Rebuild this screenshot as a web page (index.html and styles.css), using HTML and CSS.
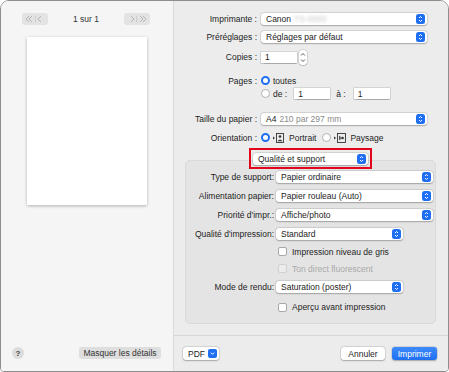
FILE: index.html
```html
<!DOCTYPE html>
<html lang="fr">
<head>
    <meta charset="UTF-8">
    <title>Imprimer</title>
    <link rel="stylesheet" href="styles.css">
</head>
<body>
    <div class="window">
        <aside class="sidebar">
            <div class="pager">
                <span class="nav-btn">
                    <svg width="20" height="8" viewBox="0 0 20 8"><path d="M4 1 1 4l3 3M7 1 4 4l3 3" fill="none" stroke="#b5b5b5" stroke-width="1"/><path d="M10.5 0.5v7" stroke="#c8c8c8" stroke-width="0.8"/><path d="M16 1l-3 3 3 3" fill="none" stroke="#b5b5b5" stroke-width="1"/></svg>
                </span>
                <span class="pager-label">1 sur 1</span>
                <span class="nav-btn">
                    <svg width="20" height="8" viewBox="0 0 20 8"><path d="M4 1l3 3-3 3" fill="none" stroke="#b5b5b5" stroke-width="1"/><path d="M9.5 0.5v7" stroke="#c8c8c8" stroke-width="0.8"/><path d="M13 1l3 3-3 3M16 1l3 3-3 3" fill="none" stroke="#b5b5b5" stroke-width="1"/></svg>
                </span>
            </div>
            <div class="sheet"></div>
            <div class="sidebar-foot">
                <span class="help">?</span>
                <span class="btn-gray">Masquer les détails</span>
            </div>
        </aside>

        <main class="main">
            <div class="settings">
                <div class="row">
                    <span class="label">Imprimante :</span>
                    <div class="popup wide">Canon<span class="redact">TS-0000</span><span class="arrows"></span></div>
                </div>
                <div class="row">
                    <span class="label">Préréglages :</span>
                    <div class="popup wide">Réglages par défaut<span class="arrows"></span></div>
                </div>
                <div class="row copies">
                    <span class="label">Copies :</span>
                    <div class="field">1</div>
                    <span class="stepper">
                        <svg width="8" height="15" viewBox="0 0 8 15"><path d="M2 5.5 4 3.5l2 2M2 9.5l2 2 2-2" fill="none" stroke="#444" stroke-width="0.9"/></svg>
                    </span>
                </div>
                <div class="row short pages">
                    <span class="label">Pages :</span>
                    <span class="radio on"></span>
                    <span>toutes</span>
                </div>
                <div class="row short">
                    <span class="label"></span>
                    <span class="radio"></span>
                    <span class="range-de">de :</span>
                    <div class="field">1</div>
                    <span class="range-a">à :</span>
                    <div class="field">1</div>
                </div>
                <div class="row paper">
                    <span class="label">Taille du papier :</span>
                    <div class="popup wide">A4 <span class="muted">210 par 297 mm</span><span class="arrows"></span></div>
                </div>
                <div class="row orient">
                    <span class="label">Orientation :</span>
                    <span class="radio on"></span>
                    <svg class="orient-icon" width="13" height="10" viewBox="0 0 13 10"><path d="M0 3.5l2 1.5-2 1.5z" fill="#333"/><rect x="3.5" y="0.5" width="7" height="9" fill="none" stroke="#333" stroke-width="0.9"/><circle cx="7" cy="3.5" r="1.3" fill="#333"/><path d="M4.8 8.2c0-2 4.4-2 4.4 0z" fill="#333"/></svg>
                    <span>Portrait</span>
                    <span class="radio gap"></span>
                    <svg class="orient-icon" width="13" height="10" viewBox="0 0 13 10"><path d="M0 3.5l2 1.5-2 1.5z" fill="#333"/><rect x="3.5" y="0.5" width="8" height="9" fill="none" stroke="#333" stroke-width="0.9"/><circle cx="8.5" cy="5" r="1.3" fill="#333"/><path d="M5.2 2.8c2 0 2 4.4 0 4.4z" fill="#333"/></svg>
                    <span>Paysage</span>
                </div>

                <div class="panel-switch">
                    <div class="popup">Qualité et support<span class="arrows"></span></div>
                </div>
                <div class="panel">
                    <div class="prow">
                        <span class="plabel">Type de support:</span>
                        <div class="popup full">Papier ordinaire<span class="arrows"></span></div>
                    </div>
                    <div class="prow">
                        <span class="plabel">Alimentation papier:</span>
                        <div class="popup full">Papier rouleau (Auto)<span class="arrows"></span></div>
                    </div>
                    <div class="prow">
                        <span class="plabel">Priorité d'impr.:</span>
                        <div class="popup full">Affiche/photo<span class="arrows"></span></div>
                    </div>
                    <div class="prow">
                        <span class="plabel">Qualité d'impression:</span>
                        <div class="popup half">Standard<span class="arrows"></span></div>
                    </div>
                    <div class="prow check-row">
                        <span class="plabel"></span>
                        <span class="check"></span>
                        <span>Impression niveau de gris</span>
                    </div>
                    <div class="prow check-row disabled">
                        <span class="plabel"></span>
                        <span class="check"></span>
                        <span>Ton direct fluorescent</span>
                    </div>
                    <div class="prow tall">
                        <span class="plabel">Mode de rendu:</span>
                        <div class="popup half">Saturation (poster)<span class="arrows"></span></div>
                    </div>
                    <div class="prow tall">
                        <span class="plabel"></span>
                        <span class="check"></span>
                        <span>Aperçu avant impression</span>
                    </div>
                </div>
            </div>

            <div class="footer">
                <span class="pdf-btn">PDF<span class="pdf-arrow"></span></span>
                <span class="spacer"></span>
                <span class="btn">Annuler</span>
                <span class="btn primary">Imprimer</span>
            </div>
        </main>
    </div>
</body>
</html>
```

FILE: styles.css
```css
body {
    margin: 0;
    font-family: 'Liberation Sans', Arial, sans-serif;
    font-size: 8.5px;
    color: #1d1d1d;
    background: #ffffff;
}
.window {
    width: 449px;
    height: 372px;
    box-sizing: border-box;
    border: 1px solid #8e8e8e;
    border-radius: 9px 9px 4px 4px;
    display: flex;
    overflow: hidden;
}

/* left preview column */
.sidebar {
    width: 172px;
    background: #f5f5f5;
    border-right: 1px solid #dadada;
    display: flex;
    flex-direction: column;
}
.pager {
    display: flex;
    align-items: center;
    justify-content: space-between;
    padding: 12px 23px 0 21px;
}
.nav-btn {
    width: 26px;
    height: 12px;
    background: #e3e3e3;
    border-radius: 3px;
    display: flex;
    align-items: center;
    justify-content: center;
}
.pager-label {
    color: #333;
}
.sheet {
    width: 120px;
    height: 168px;
    margin: 12px auto 0;
    background: #ffffff;
    box-shadow: 0 1px 3px rgba(0, 0, 0, 0.28);
}
.sidebar-foot {
    margin-top: auto;
    height: 36px;
    display: flex;
    align-items: center;
    justify-content: space-between;
    padding: 0 12px 0 11px;
}
.help {
    width: 12px;
    height: 12px;
    border-radius: 50%;
    background: #dcdcdc;
    font-weight: bold;
    font-size: 8px;
    color: #444;
    display: flex;
    align-items: center;
    justify-content: center;
}
.btn-gray {
    width: 82px;
    height: 12px;
    background: #dedede;
    border-radius: 3px;
    color: #333;
    display: flex;
    align-items: center;
    justify-content: center;
}

/* right settings column */
.main {
    flex: 1;
    background: #ececec;
    display: flex;
    flex-direction: column;
}
.settings {
    flex: 1;
    padding-top: 9px;
}
.row {
    display: flex;
    align-items: center;
    height: 18px;
}
.label {
    width: 83px;
    margin-right: 4px;
    text-align: right;
    flex-shrink: 0;
}
.copies {
    margin-top: 2px;
}
.short {
    height: 13px;
}
.pages {
    margin-top: 8px;
}
.paper {
    margin-top: 10px;
}
.orient {
    height: 19px;
}

.popup {
    position: relative;
    height: 12px;
    box-sizing: border-box;
    background: #ffffff;
    border-radius: 3px;
    box-shadow: 0 0 0 0.5px rgba(0, 0, 0, 0.12), 0 0.5px 1.5px rgba(0, 0, 0, 0.25);
    padding-left: 5px;
    display: flex;
    align-items: center;
    white-space: nowrap;
}
.popup.wide {
    width: 166px;
}
.popup.full {
    width: 157px;
}
.popup.half {
    width: 127px;
}
.arrows {
    margin-left: auto;
    margin-right: 2px;
    width: 9px;
    height: 10px;
    border-radius: 2.5px;
    background: #1f6ff2 url("data:image/svg+xml;utf8,<svg xmlns='http://www.w3.org/2000/svg' width='9' height='10' viewBox='0 0 9 10'><path d='M3 4 4.5 2.5 6 4M3 6l1.5 1.5L6 6' fill='none' stroke='white' stroke-width='1'/></svg>") no-repeat center;
}
.redact {
    color: #c9c9c9;
    filter: blur(1.4px);
    margin-left: 3px;
}
.muted {
    color: #8a8a8a;
    margin-left: 3px;
}

.field {
    width: 36px;
    height: 11px;
    box-sizing: border-box;
    background: #ffffff;
    box-shadow: 0 0 0 0.5px rgba(0, 0, 0, 0.2), 0 0.5px 1px rgba(0, 0, 0, 0.2);
    padding-left: 4px;
    display: flex;
    align-items: center;
}
.stepper {
    margin-left: 2px;
    width: 8px;
    height: 15px;
    background: #ffffff;
    border-radius: 3px;
    box-shadow: 0 0 0 0.5px rgba(0, 0, 0, 0.2), 0 0.5px 1px rgba(0, 0, 0, 0.2);
    display: flex;
}
.radio {
    width: 9px;
    height: 9px;
    box-sizing: border-box;
    border-radius: 50%;
    background: #ffffff;
    border: 0.5px solid #b0b0b0;
    margin-right: 3px;
    flex-shrink: 0;
}
.radio.on {
    border: 2.6px solid #1f6ff2;
}
.radio.gap {
    margin-left: 6px;
}
.range-de {
    margin-right: 7px;
}
.range-a {
    margin: 0 8px 0 6px;
}
.orient-icon {
    margin-right: 3px;
}

/* quality panel */
.panel-switch {
    position: relative;
    z-index: 1;
    width: 119px;
    height: 17px;
    margin: 1px 0 0 75px;
    border: 2px solid #e3051b;
    display: flex;
    align-items: center;
    justify-content: center;
}
.panel-switch .popup {
    width: 115px;
    padding-left: 5px;
}
.panel {
    margin: -9px 12px 0 11px;
    height: 164px;
    box-sizing: border-box;
    padding-top: 6px;
    background: #e4e4e4;
    border: 1px solid #dadada;
    border-radius: 5px;
}
.prow {
    display: flex;
    align-items: center;
    height: 19px;
}
.prow.check-row {
    height: 17px;
}
.prow.tall {
    height: 20px;
}
.plabel {
    width: 88px;
    margin-right: 2px;
    text-align: right;
    flex-shrink: 0;
}
.check {
    width: 9px;
    height: 9px;
    box-sizing: border-box;
    background: #ffffff;
    border: 0.5px solid #a8a8a8;
    border-radius: 2px;
    margin: 0 5px 0 2px;
}
.disabled {
    color: #a9a9a9;
}
.disabled .check {
    background: #ececec;
    border-color: #d0d0d0;
}

/* bottom bar */
.footer {
    height: 36px;
    box-sizing: border-box;
    border-top: 1px solid #d6d6d6;
    display: flex;
    align-items: center;
    padding: 0 11px 0 9px;
}
.spacer {
    flex: 1;
}
.pdf-btn {
    width: 36px;
    height: 13px;
    box-sizing: border-box;
    background: #ffffff;
    border-radius: 3px;
    box-shadow: 0 0 0 0.5px rgba(0, 0, 0, 0.12), 0 0.5px 1.5px rgba(0, 0, 0, 0.25);
    padding-left: 5px;
    display: flex;
    align-items: center;
}
.pdf-arrow {
    margin-left: auto;
    margin-right: 2px;
    width: 9px;
    height: 9px;
    border-radius: 2px;
    background: #1f6ff2 url("data:image/svg+xml;utf8,<svg xmlns='http://www.w3.org/2000/svg' width='9' height='9' viewBox='0 0 9 9'><path d='M2.8 3.6 4.5 5.3 6.2 3.6' fill='none' stroke='white' stroke-width='1'/></svg>") no-repeat center;
}
.btn {
    width: 44px;
    height: 13px;
    box-sizing: border-box;
    background: #ffffff;
    border-radius: 3px;
    box-shadow: 0 0 0 0.5px rgba(0, 0, 0, 0.12), 0 0.5px 1.5px rgba(0, 0, 0, 0.25);
    display: flex;
    align-items: center;
    justify-content: center;
    margin-left: 7px;
}
.btn.primary {
    width: 45px;
    background: linear-gradient(#3d8bfa, #1f6ef0);
    color: #ffffff;
}
```
